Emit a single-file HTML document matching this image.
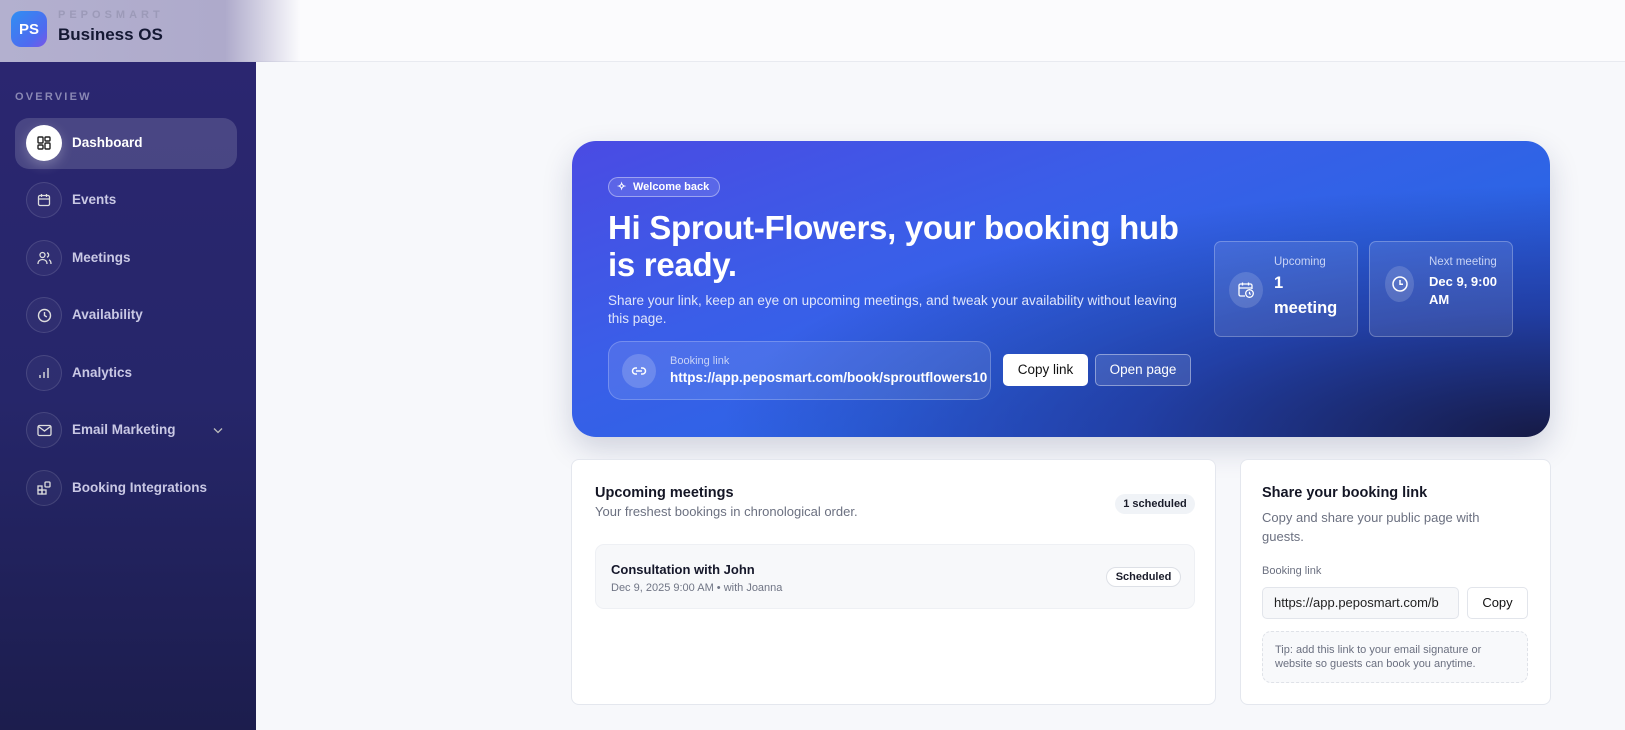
<!DOCTYPE html>
<html><head><meta charset="utf-8"><style>
*{box-sizing:border-box;margin:0;padding:0}
body{width:1625px;height:730px;overflow:hidden;background:#f7f8fb;font-family:"Liberation Sans",Arial,sans-serif;position:relative}
.hdr{position:absolute;left:0;top:0;width:1625px;height:62px;background:#fbfbfd;border-bottom:1px solid #e8eaf0}
.hdrl{position:absolute;left:0;top:0;width:300px;height:62px;background:linear-gradient(90deg,#b3b0cf 0%,#aeaacb 75%,rgba(240,240,246,0) 100%)}
.logo{position:absolute;left:11px;top:11px;width:36px;height:36px;border-radius:10px;background:linear-gradient(135deg,#2f8ff2,#4f6af0 70%,#7c55e6);color:#fff;font-weight:700;font-size:15px;display:flex;align-items:center;justify-content:center}
.brand1{position:absolute;left:58px;top:9px;font-size:11px;letter-spacing:4px;color:#9c9ab8;font-weight:700}
.brand2{position:absolute;left:58px;top:25px;font-size:17px;color:#141833;font-weight:700}
.side{position:absolute;left:0;top:62px;width:256px;height:668px;background:linear-gradient(180deg,#2b2670 0%,#26266a 50%,#1c1d4d 100%)}
.ov{position:absolute;left:15px;top:91px;font-size:11px;letter-spacing:2.2px;font-weight:700;color:#8a88b4}
.it{position:absolute;left:15px;width:222px;height:51px;border-radius:14px}
.it .ic{position:absolute;left:11px;top:7px;width:36px;height:36px;border-radius:50%;border:1px solid rgba(255,255,255,.12);background:rgba(255,255,255,.04);display:flex;align-items:center;justify-content:center}
.it .lb{position:absolute;left:57px;top:17px;font-size:13.5px;font-weight:700;color:#c9c8e4}
.act{background:rgba(255,255,255,.15)}
.act .ic{background:#fff;border:none;box-shadow:0 4px 12px rgba(255,255,255,.25)}
.act .lb{color:#fff}
.hero{position:absolute;left:572px;top:141px;width:978px;height:296px;border-radius:24px;background:radial-gradient(ellipse at 100% 100%,#161a45 0%,rgba(30,50,140,.7) 30%,rgba(37,99,235,0) 60%),linear-gradient(160deg,#4a4be3 0%,#3a5ee8 35%,#2d64e6 60%,#2552d4 100%);box-shadow:0 12px 30px rgba(30,40,90,.18);color:#fff}
.badge{position:absolute;left:36px;top:36px;height:20px;padding:0 10px 0 24px;border:1px solid rgba(255,255,255,.4);border-radius:10px;background:rgba(255,255,255,.12);font-size:11px;font-weight:700;line-height:18px}
.h1{position:absolute;left:36px;top:68px;width:585px;font-size:33px;font-weight:700;line-height:37px;letter-spacing:-.3px}
.sub{position:absolute;left:36px;top:151px;width:580px;font-size:13.5px;line-height:18px;color:#dfe5fb}
.lnk{position:absolute;left:36px;top:200px;width:383px;height:59px;border-radius:14px;border:1px solid rgba(255,255,255,.22);background:rgba(255,255,255,.1)}
.lnk .c{position:absolute;left:13px;top:12px;width:34px;height:34px;border-radius:50%;background:rgba(255,255,255,.18);display:flex;align-items:center;justify-content:center}
.lnk .t1{position:absolute;left:61px;top:13px;font-size:11px;color:#c9d4f7}
.lnk .t2{position:absolute;left:61px;top:28px;font-size:13.5px;font-weight:700;white-space:nowrap}
.b1{position:absolute;left:431px;top:213px;width:85px;height:32px;background:#fff;color:#111;border-radius:5px;font-size:13.5px;text-align:center;line-height:32px}
.b2{position:absolute;left:523px;top:213px;width:96px;height:32px;border:1px solid rgba(255,255,255,.4);background:rgba(255,255,255,.12);border-radius:5px;font-size:13.5px;text-align:center;line-height:30px}
.st{position:absolute;top:100px;width:144px;height:96px;border-radius:7px;border:1px solid rgba(255,255,255,.25);background:rgba(255,255,255,.1)}
.st .c{position:absolute;left:14px;top:30px;width:34px;height:36px;border-radius:50%;background:rgba(255,255,255,.15);display:flex;align-items:center;justify-content:center}
.st .l{position:absolute;left:59px;top:14px;font-size:11.5px;color:#c8d3f5}
.st .v{position:absolute;left:59px;top:31px;font-weight:700;color:#fff}
.card{position:absolute;top:459px;height:246px;background:#fff;border:1px solid #e4e7ee;border-radius:8px}
.ct{position:absolute;font-size:14.5px;font-weight:700;color:#141625}
.cs{position:absolute;font-size:13px;color:#6b7080;line-height:19px}
.pill{position:absolute;font-size:11px;font-weight:700;color:#1a1c2a;text-align:center}
</style></head><body>
<div class="hdr"></div><div class="hdrl"></div>
<div class="logo">PS</div>
<div class="brand1">PEPOSMART</div>
<div class="brand2">Business OS</div>
<div class="side"></div>
<div class="ov">OVERVIEW</div>
<div class="it act" style="top:118px"><div class="ic"><svg width="14" height="14" viewBox="0 0 14 14" fill="none" stroke="#222" stroke-width="1.4"><rect x="1" y="1" width="5" height="6" rx="1"/><rect x="8" y="1" width="5" height="4" rx="1"/><rect x="1" y="9" width="5" height="4" rx="1"/><rect x="8" y="7" width="5" height="6" rx="1"/></svg></div><div class="lb">Dashboard</div></div>
<div class="it" style="top:175px"><div class="ic"><svg width="14" height="14" viewBox="0 0 14 14" fill="none" stroke="#ddd" stroke-width="1.3"><rect x="1.5" y="2.5" width="11" height="10" rx="1.5"/><path d="M1.5 6h11M4.5 1v3M9.5 1v3"/></svg></div><div class="lb">Events</div></div>
<div class="it" style="top:233px"><div class="ic"><svg width="15" height="14" viewBox="0 0 15 14" fill="none" stroke="#ddd" stroke-width="1.3"><circle cx="5.5" cy="4" r="2.5"/><path d="M1 13c0-3 2-4.5 4.5-4.5S10 10 10 13M10 1.8a2.3 2.3 0 010 4.4M12 8.8c1.3.6 2 2 2 4.2"/></svg></div><div class="lb">Meetings</div></div>
<div class="it" style="top:290px"><div class="ic"><svg width="15" height="15" viewBox="0 0 15 15" fill="none" stroke="#ddd" stroke-width="1.4"><circle cx="7.5" cy="7.5" r="6"/><path d="M7.5 4v3.5l2.3 1.5"/></svg></div><div class="lb">Availability</div></div>
<div class="it" style="top:348px"><div class="ic"><svg width="12" height="12" viewBox="0 0 12 12" fill="none" stroke="#ddd" stroke-width="1.4"><path d="M2 11V8M6 11V5M10 11V1"/></svg></div><div class="lb">Analytics</div></div>
<div class="it" style="top:405px"><div class="ic"><svg width="15" height="13" viewBox="0 0 15 13" fill="none" stroke="#ddd" stroke-width="1.3"><rect x="1" y="1.5" width="13" height="10" rx="1.5"/><path d="M1.5 2.5l6 4.5 6-4.5"/></svg></div><div class="lb">Email Marketing</div><svg style="position:absolute;left:198px;top:22px" width="10" height="7" viewBox="0 0 10 7" fill="none" stroke="#bbb" stroke-width="1.3"><path d="M1 1.5l4 4 4-4"/></svg></div>
<div class="it" style="top:463px"><div class="ic"><svg width="14" height="14" viewBox="0 0 14 14" fill="none" stroke="#ddd" stroke-width="1.3"><rect x="1" y="5" width="4" height="4"/><rect x="1" y="9" width="4" height="4"/><rect x="5" y="9" width="4" height="4"/><rect x="8" y="1" width="5" height="5" rx="1"/></svg></div><div class="lb">Booking Integrations</div></div>

<div class="hero">
<div class="badge"><span style="position:absolute;left:8px;top:0;font-size:11px">✧</span>Welcome back</div>
<div class="h1">Hi Sprout-Flowers, your booking hub is ready.</div>
<div class="sub">Share your link, keep an eye on upcoming meetings, and tweak your availability without leaving this page.</div>
<div class="lnk"><div class="c"><svg width="16" height="12" viewBox="0 0 16 12" fill="none" stroke="#fff" stroke-width="1.5"><path d="M6 3H4.5a3 3 0 000 6H6M10 3h1.5a3 3 0 010 6H10M5 6h6"/></svg></div><div class="t1">Booking link</div><div class="t2">https://app.peposmart.com/book/sproutflowers10</div></div>
<div class="b1">Copy link</div><div class="b2">Open page</div>
<div class="st" style="left:642px"><div class="c"><svg width="18" height="18" viewBox="0 0 18 18" fill="none" stroke="#fff" stroke-width="1.3"><path d="M8 15H3.5A1.5 1.5 0 012 13.5v-9A1.5 1.5 0 013.5 3h10A1.5 1.5 0 0115 4.5V8M2 7h13M5.5 1.5v3M11.5 1.5v3"/><circle cx="12.5" cy="12.5" r="3.8"/><path d="M12.5 10.8v1.9l1.2.8"/></svg></div><div class="l">Upcoming</div><div class="v" style="font-size:16.5px;line-height:25px;top:29px">1<br>meeting</div></div>
<div class="st" style="left:797px"><div class="c" style="left:15px;top:24px;width:29px"><svg width="18" height="18" viewBox="0 0 18 18" fill="none" stroke="#fff" stroke-width="1.5"><circle cx="9" cy="9" r="7"/><path d="M9 5v4.3h3"/></svg></div><div class="l">Next meeting</div><div class="v" style="font-size:13px;line-height:18px">Dec 9, 9:00<br>AM</div></div>
</div>

<div class="card" style="left:571px;width:645px">
<div class="ct" style="left:23px;top:25px">Upcoming meetings</div>
<div class="cs" style="left:23px;top:42px">Your freshest bookings in chronological order.</div>
<div class="pill" style="left:543px;top:34px;width:80px;height:20px;line-height:20px;background:#f0f3f7;border-radius:10px">1 scheduled</div>
<div style="position:absolute;left:23px;top:84px;width:600px;height:65px;background:#f7f8fa;border:1px solid #eef0f4;border-radius:9px">
<div style="position:absolute;left:15px;top:17px;font-size:13px;font-weight:700;color:#15172a">Consultation with John</div>
<div style="position:absolute;left:15px;top:37px;font-size:11px;color:#707585">Dec 9, 2025 9:00 AM • with Joanna</div>
<div class="pill" style="left:510px;top:22px;width:75px;height:20px;line-height:18px;border:1px solid #dde0e6;border-radius:10px;background:#fff">Scheduled</div>
</div></div>

<div class="card" style="left:1240px;width:311px">
<div class="ct" style="left:21px;top:25px">Share your booking link</div>
<div class="cs" style="left:21px;top:48px;width:250px">Copy and share your public page with guests.</div>
<div style="position:absolute;left:21px;top:105px;font-size:11px;color:#6b7080">Booking link</div>
<div style="position:absolute;left:21px;top:127px;width:197px;height:32px;background:#f7f8fa;border:1px solid #e2e5eb;border-radius:5px;font-size:13px;color:#222;padding:7px 0 0 11px;overflow:hidden;white-space:nowrap">https://app.peposmart.com/b</div>
<div style="position:absolute;left:226px;top:127px;width:61px;height:32px;background:#fff;border:1px solid #e2e5eb;border-radius:5px;font-size:13px;color:#111;text-align:center;line-height:30px">Copy</div>
<div style="position:absolute;left:21px;top:171px;width:266px;height:52px;background:#f8f9fb;border:1px dashed #dfe2e8;border-radius:9px;font-size:11px;line-height:14px;color:#6b7080;padding:11px 12px">Tip: add this link to your email signature or website so guests can book you anytime.</div>
</div>
</body></html>
